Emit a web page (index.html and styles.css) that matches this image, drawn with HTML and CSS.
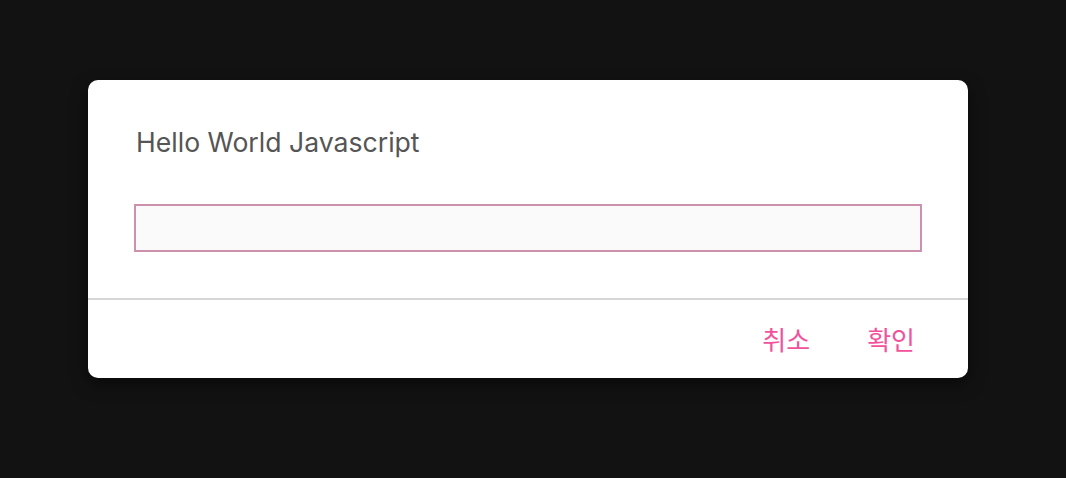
FILE: index.html
```html
<!DOCTYPE html>
<html lang="ko">
<head>
<meta charset="utf-8">
<link rel="stylesheet" href="styles.css">
</head>
<body>
<div class="dialog">
  <div class="dialog-body">
    <div class="dialog-title">Hello World Javascript</div>
    <input class="dialog-input" type="text">
  </div>
  <div class="dialog-footer">
    <button class="btn">취소</button>
    <button class="btn">확인</button>
  </div>
</div>
</body>
</html>
```
FILE: styles.css
```css
html, body {
  margin: 0;
  height: 100%;
}
body {
  background: #121212;
  padding: 80px 0 0 88px;
  box-sizing: border-box;
  font-family: Inter, "Noto Sans CJK KR", sans-serif;
}
.dialog {
  width: 880px;
  background: #ffffff;
  border-radius: 10px;
  box-shadow: 0 6px 16px rgba(0, 0, 0, 0.5);
  overflow: hidden;
}
.dialog-body {
  padding: 44px 46px 46px;
  border-bottom: 2px solid #d6d6d6;
}
.dialog-title {
  font-size: 26.6px;
  line-height: 36px;
  color: #555555;
  padding-left: 2px;
  margin-bottom: 44px;
}
.dialog-input {
  display: block;
  width: 100%;
  box-sizing: border-box;
  height: 48px;
  border: 2px solid #cd91ae;
  background: #fafafa;
  outline: none;
  margin: 0;
  padding: 0 12px;
  font-size: 20px;
}
.dialog-footer {
  display: flex;
  justify-content: flex-end;
  align-items: center;
  height: 78px;
  padding-right: 45px;
  gap: 41px;
}
.btn {
  border: none;
  background: none;
  padding: 0 8px;
  font-family: "Noto Sans CJK KR", sans-serif;
  font-size: 26px;
  font-weight: 400;
  line-height: 36px;
  color: #f2529d;
  cursor: pointer;
}
```
